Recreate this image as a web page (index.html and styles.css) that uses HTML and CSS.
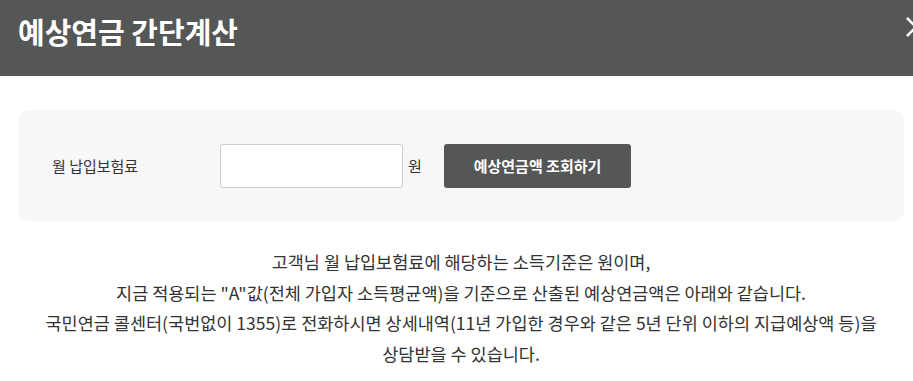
FILE: index.html
```html
<!DOCTYPE html>
<html>
<head>
  <meta charset="utf-8">
  <title>예상연금 간단계산</title>
  <link rel="stylesheet" href="styles.css">
</head>
<body>
  <div class="popup">
    <div class="popup-head">
      <h1>예상연금 간단계산</h1>
      <button class="close-btn" aria-label="닫기">
        <svg width="22" height="22" viewBox="0 0 22 22">
          <path d="M2 2 L20 20 M20 2 L2 20" stroke="#fff" stroke-width="2.6" fill="none"/>
        </svg>
      </button>
    </div>

    <div class="popup-body">
      <div class="calc-box">
        <label for="premium">월 납입보험료</label>
        <input type="text" id="premium">
        <span class="unit">원</span>
        <button class="calc-btn">예상연금액 조회하기</button>
      </div>

      <div class="notice">
        <p>고객님 월 납입보험료에 해당하는 소득기준은 원이며,</p>
        <p>지금 적용되는 "A"값(전체 가입자 소득평균액)을 기준으로 산출된 예상연금액은 아래와 같습니다.</p>
        <p>국민연금 콜센터(국번없이 1355)로 전화하시면 상세내역(11년 가입한 경우와 같은 5년 단위 이하의 지급예상액 등)을</p>
        <p>상담받을 수 있습니다.</p>
      </div>
    </div>
  </div>
</body>
</html>
```

FILE: styles.css
```css
body {
  margin: 0;
  font-family: "Noto Sans CJK KR", "Noto Sans", sans-serif;
  color: #333;
  background: #fff;
  overflow: hidden;
}
.popup {
  width: 913px;
}
.popup-head {
  position: relative;
  height: 76px;
  background-color: #555756;
  padding: 0 18px;
  display: flex;
  align-items: center;
}
.popup-head h1 {
  margin: 0;
  margin-top: -14px;
  font-size: 29px;
  font-weight: 700;
  color: #fff;
}
.close-btn {
  position: absolute;
  left: 905px;
  top: 16px;
  padding: 0;
  border: none;
  background: none;
}
.popup-body {
  padding: 34px 9px 0 18px;
}
.calc-box {
  height: 111px;
  background-color: #f7f7f7;
  border-radius: 10px;
  display: flex;
  align-items: center;
  padding-left: 34px;
  box-sizing: border-box;
}
.calc-box label {
  width: 168px;
  font-size: 15px;
  color: #333;
}
.calc-box input {
  width: 183px;
  height: 44px;
  box-sizing: border-box;
  border: 1px solid #ccc;
  border-radius: 3px;
  background: #fff;
}
.unit {
  font-size: 15px;
  margin-left: 5px;
  width: 36px;
}
.calc-btn {
  width: 187px;
  height: 44px;
  border: none;
  border-radius: 3px;
  background-color: #555756;
  color: #fff;
  font-family: inherit;
  font-size: 15px;
  font-weight: 700;
}
.notice {
  margin-top: 26px;
  text-align: center;
  font-size: 17.5px;
  line-height: 30.5px;
}
.notice p {
  margin: 0;
}
```
